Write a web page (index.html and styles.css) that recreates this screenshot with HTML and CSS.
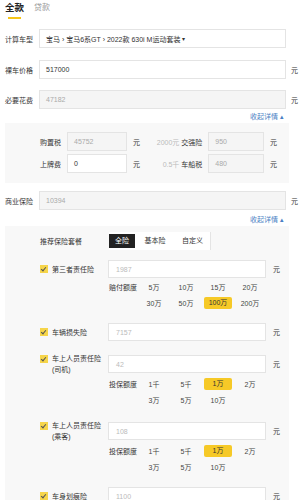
FILE: index.html
```html
<!DOCTYPE html>
<html lang="zh-CN">
<head>
    <meta charset="UTF-8">
    <meta name="viewport" content="width=device-width, initial-scale=1.0">
    <title>购车计算器</title>
    <link rel="stylesheet" href="styles.css">
</head>
<body>
    <div class="tabs">
        <span class="tab active">全款</span>
        <span class="tab">贷款</span>
    </div>

    <div class="row row-model">
        <span class="row-label">计算车型</span>
        <div class="field">宝马 › 宝马6系GT › 2022款 630i M运动套装 <span class="caret">▾</span></div>
    </div>
    <div class="row">
        <span class="row-label">裸车价格</span>
        <div class="field">517000</div>
        <span class="unit">元</span>
    </div>
    <div class="row row-tight">
        <span class="row-label">必要花费</span>
        <div class="field disabled">47182</div>
        <span class="unit">元</span>
    </div>
    <div class="toggle">收起详情 ▴</div>

    <div class="panel fees">
        <div class="fee-row">
            <div class="fee">
                <span class="fee-label">购置税</span>
                <div class="field disabled">45752</div>
                <span class="unit">元</span>
            </div>
            <div class="fee fee-right">
                <span class="fee-label"><em>2000元</em> 交强险</span>
                <div class="field disabled">950</div>
                <span class="unit">元</span>
            </div>
        </div>
        <div class="fee-row">
            <div class="fee">
                <span class="fee-label">上牌费</span>
                <div class="field">0</div>
                <span class="unit">元</span>
            </div>
            <div class="fee fee-right">
                <span class="fee-label"><em>0.5千</em> 车船税</span>
                <div class="field disabled">480</div>
                <span class="unit">元</span>
            </div>
        </div>
    </div>

    <div class="row row-biz">
        <span class="row-label">商业保险</span>
        <div class="field disabled">10394</div>
        <span class="unit">元</span>
    </div>
    <div class="toggle toggle-biz">收起详情 ▴</div>

    <div class="panel insurance">
        <div class="plan-row">
            <span class="plan-label">推荐保险套餐</span>
            <div class="segment">
                <span class="seg on">全险</span>
                <span class="seg seg-basic">基本险</span>
                <span class="seg seg-custom">自定义</span>
            </div>
        </div>

        <div class="ins">
            <div class="ins-row">
                <div class="ins-name"><i class="check"></i><span>第三者责任险</span></div>
                <div class="field hint">1987</div>
                <span class="unit">元</span>
            </div>
            <div class="opts">
                <span class="opt-label">赔付额度</span>
                <span class="opt">5万</span>
                <span class="opt">10万</span>
                <span class="opt">15万</span>
                <span class="opt">20万</span>
                <span class="opt wrap">30万</span>
                <span class="opt">50万</span>
                <span class="opt"><b>100万</b></span>
                <span class="opt">200万</span>
            </div>
        </div>

        <div class="ins">
            <div class="ins-row">
                <div class="ins-name"><i class="check"></i><span>车辆损失险</span></div>
                <div class="field hint">7157</div>
                <span class="unit">元</span>
            </div>
        </div>

        <div class="ins">
            <div class="ins-row">
                <div class="ins-name"><i class="check"></i><span>车上人员责任险<br>(司机)</span></div>
                <div class="field hint">42</div>
                <span class="unit">元</span>
            </div>
            <div class="opts">
                <span class="opt-label">投保额度</span>
                <span class="opt">1千</span>
                <span class="opt">5千</span>
                <span class="opt"><b>1万</b></span>
                <span class="opt">2万</span>
                <span class="opt wrap">3万</span>
                <span class="opt">5万</span>
                <span class="opt">10万</span>
            </div>
        </div>

        <div class="ins">
            <div class="ins-row">
                <div class="ins-name"><i class="check"></i><span>车上人员责任险<br>(乘客)</span></div>
                <div class="field hint">108</div>
                <span class="unit">元</span>
            </div>
            <div class="opts">
                <span class="opt-label">投保额度</span>
                <span class="opt">1千</span>
                <span class="opt">5千</span>
                <span class="opt"><b>1万</b></span>
                <span class="opt">2万</span>
                <span class="opt wrap">3万</span>
                <span class="opt">5万</span>
                <span class="opt">10万</span>
            </div>
        </div>

        <div class="ins">
            <div class="ins-row">
                <div class="ins-name"><i class="check"></i><span>车身划痕险</span></div>
                <div class="field hint">1100</div>
                <span class="unit">元</span>
            </div>
        </div>
    </div>
</body>
</html>
```

FILE: styles.css
```css
body {
    margin: 0;
    font-family: 'Liberation Sans', 'Noto Sans CJK SC', sans-serif;
    font-size: 7px;
    color: #333;
    background-color: #fff;
}

/* tabs */
.tabs {
    display: flex;
    align-items: flex-start;
    height: 29px;
    padding-left: 5px;
}

.tab {
    display: flex;
    flex-direction: column;
    margin-left: 10px;
    padding-top: 2px;
    font-size: 8px;
    line-height: 12px;
    color: #999;
}

.tab.active {
    margin-left: 0;
    padding-top: 1px;
    font-size: 9.5px;
    line-height: 14px;
    font-weight: bold;
    color: #222;
}

.tab.active::after {
    content: '';
    width: 13px;
    height: 2px;
    margin: 2px 0 0 3px;
    background-color: #f5c518;
}

/* form rows */
.row {
    display: flex;
    align-items: center;
    height: 19px;
    padding-left: 5px;
    margin-bottom: 11px;
}

.row-model {
    margin-bottom: 12px;
}

.row-tight {
    margin-bottom: 3px;
}

.row-label {
    width: 34px;
    flex-shrink: 0;
}

.field {
    box-sizing: border-box;
    display: flex;
    align-items: center;
    width: 247px;
    height: 19px;
    padding-left: 6px;
    border: 1px solid #e4e4e4;
    background-color: #fff;
    color: #333;
    white-space: nowrap;
    overflow: hidden;
}

.field.disabled {
    background-color: #f5f5f5;
    color: #aaa;
}

.field.hint {
    color: #bbb;
}

.caret {
    margin-left: 2px;
    font-size: 6px;
}

.unit {
    margin-left: 5px;
}

.toggle {
    margin-bottom: 1px;
    padding-right: 20px;
    text-align: right;
    line-height: 10px;
    color: #4a7fc4;
}

.row-biz {
    margin-top: 8px;
    margin-bottom: 5px;
}

/* grey panels */
.panel {
    margin: 0 15px 0 5px;
    background-color: #f8f8f8;
}

.fees {
    padding: 9px 0 10px;
}

.fee-row {
    display: flex;
    height: 19px;
}

.fee-row + .fee-row {
    margin-top: 3px;
}

.fee {
    display: flex;
    align-items: center;
    width: 136px;
}

.fee-label {
    width: 56px;
    margin-right: 6px;
    text-align: right;
    white-space: nowrap;
}

.fee-label em {
    font-style: normal;
    color: #bbb;
}

.fee .field {
    width: 60px;
}

.fee .unit {
    margin-left: 6px;
}

.fee-right .fee-label {
    width: 63px;
}

.fee-right .field {
    width: 57px;
}

/* insurance panel */
.insurance {
    padding: 6px 0 20px 35px;
}

.plan-row {
    display: flex;
    align-items: center;
    height: 18px;
    margin-bottom: 10px;
}

.plan-label {
    width: 69px;
}

.segment {
    display: flex;
    height: 18px;
    background-color: #fff;
    border-right: 1px solid #e4e4e4;
}

.seg {
    width: 35px;
    margin: 2px 0;
    line-height: 14px;
    text-align: center;
}

.seg.on {
    width: 26px;
    background-color: #222;
    color: #fff;
}

.seg-basic {
    width: 40px;
}

.ins {
    margin-bottom: 12px;
}

.ins-row {
    display: flex;
    align-items: center;
    min-height: 18px;
}

.ins-name {
    display: flex;
    align-items: flex-start;
    width: 68px;
    line-height: 11px;
}

.check {
    position: relative;
    flex-shrink: 0;
    width: 8px;
    height: 8px;
    margin: 1.5px 4px 0 0;
    background-color: #f6d54a;
}

.check::after {
    content: '';
    position: absolute;
    left: 2px;
    top: 1px;
    width: 2px;
    height: 4px;
    border: solid #555;
    border-width: 0 1px 1px 0;
    transform: rotate(40deg);
}

.ins .field {
    width: 158px;
    height: 18px;
    padding-left: 7px;
}

.ins .unit {
    margin-left: 7px;
}

.opts {
    display: grid;
    grid-template-columns: 30px repeat(4, 32px);
    grid-auto-rows: 16px;
    align-items: center;
    margin: 1px 0 0 68px;
}

.opt-label {
    padding-left: 1px;
}

.opt {
    display: flex;
    justify-content: center;
    color: #444;
}

.opt.wrap {
    grid-column: 2;
}

.opt b {
    width: 28px;
    font-weight: normal;
    line-height: 12px;
    text-align: center;
    border-radius: 2px;
    background-color: #f6c927;
    color: #333;
}
```
